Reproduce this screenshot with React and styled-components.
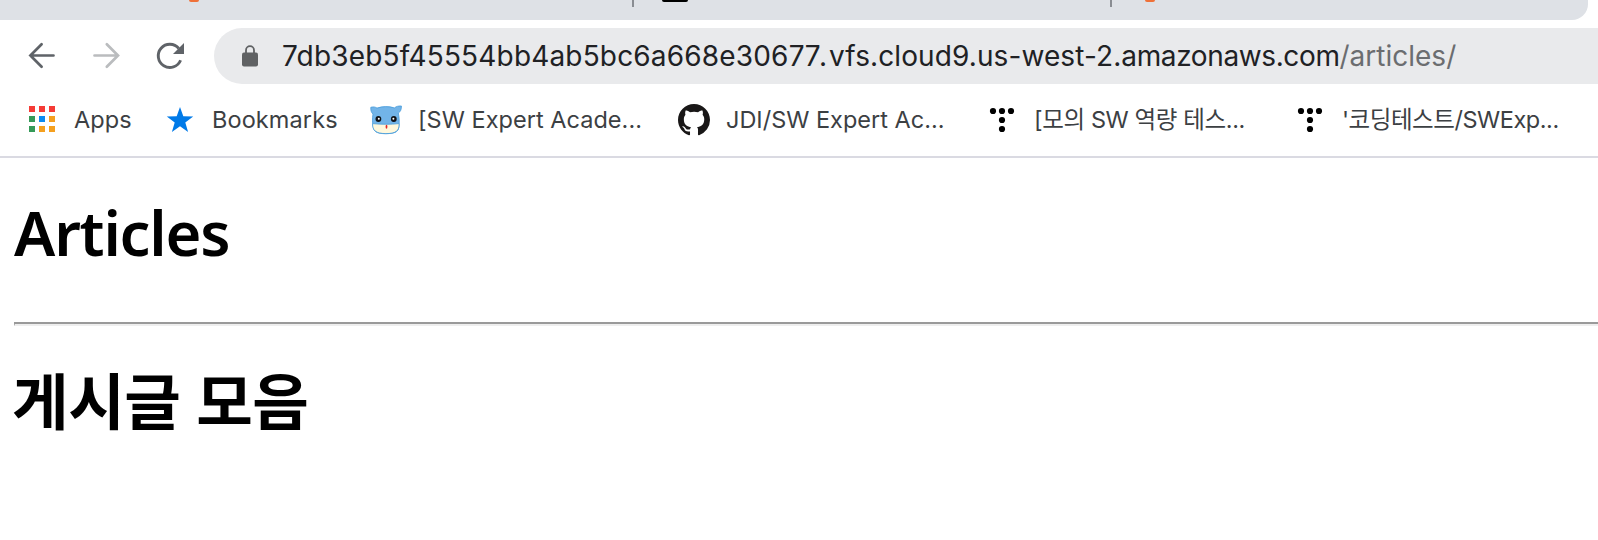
import React from "react";
import styled, { createGlobalStyle } from "styled-components";

const GlobalStyle = createGlobalStyle`
  * { box-sizing: border-box; }
  body { margin: 0; background: #fff; overflow: hidden; }
`;

const Window = styled.div`
  height: 540px;
  display: flex;
  flex-direction: column;
  overflow: hidden;
  background: #fff;
  font-family: Inter, "Noto Sans CJK KR", sans-serif;
`;

const TabStrip = styled.div`
  display: flex;
  align-items: flex-start;
  flex: none;
  width: 1588px;
  height: 20px;
  background: #dee1e6;
  border-bottom-right-radius: 16px;
`;

const Favicon = styled.span`
  flex: none;
  width: ${(p) => p.$width}px;
  height: 2px;
  margin-left: ${(p) => p.$offset}px;
  background: ${(p) => p.$color};
  border-radius: 0 0 5px 5px;
`;

const TabDivider = styled.span`
  flex: none;
  width: 2px;
  height: 7px;
  margin-left: ${(p) => p.$offset}px;
  background: #898c92;
`;

const Toolbar = styled.div`
  display: flex;
  align-items: center;
  flex: none;
  height: 72px;
  padding-left: 26px;
`;

const NavButton = styled.span`
  display: flex;
  flex: none;
  width: 32px;
  height: 32px;
  margin-right: 32px;
`;

const AddressBar = styled.div`
  display: flex;
  align-items: center;
  flex: 1;
  height: 56px;
  margin-left: -4px;
  padding-left: 28px;
  background: #e9eaec;
  border-radius: 28px 0 0 28px;
`;

const Url = styled.div`
  margin-left: 24px;
  font-size: 28px;
  line-height: 40px;
  white-space: nowrap;
  color: #202124;
`;

const Host = styled.span`
  letter-spacing: ${(p) => p.$spacing}px;
`;

const Path = styled.span`
  letter-spacing: ${(p) => p.$spacing}px;
  color: #6b6d70;
`;

const BookmarksBar = styled.nav`
  display: grid;
  grid-template-columns: 138px 206px 308px 308px 308px 304px;
  align-items: center;
  flex: none;
  height: 66px;
  padding: 0 0 8px 26px;
  border-bottom: 2px solid #dadae2;
`;

const Bookmark = styled.div`
  display: flex;
  align-items: center;
  gap: 16px;
  height: 40px;
`;

const BookmarkIcon = styled.span`
  display: flex;
  flex: none;
  width: 32px;
  height: 32px;
`;

const BookmarkLabel = styled.span`
  font-size: 23.5px;
  line-height: 40px;
  letter-spacing: ${(p) => p.$spacing}px;
  white-space: nowrap;
  color: #3c4043;
`;

const Page = styled.main`
  flex: 1;
  padding-left: 14px;
  font-family: "Noto Sans", "Noto Sans CJK KR", sans-serif;
  color: #000;
`;

const Heading = styled.h1`
  margin: ${(p) => p.$top}px 0 0 ${(p) => p.$left || 0}px;
  height: 90px;
  font-size: ${(p) => p.$size}px;
  line-height: 90px;
  font-weight: ${(p) => p.$weight};
  letter-spacing: ${(p) => p.$spacing}px;
  white-space: nowrap;
`;

const Rule = styled.hr`
  height: 4px;
  margin: 45px 0 0;
  border: solid;
  border-width: 2px 0 2px 1px;
  border-color: #9a9a9a #eee #eee #9a9a9a;
`;

const BackIcon = () => (
  <svg width="32" height="32" viewBox="0 0 32 32" fill="none" stroke="#5f6368" strokeWidth="2.7" strokeLinecap="round">
    <path d="M27.500 15.500H4.500M15.600 4.200L4.400 15.500l11.200 11.200" />
  </svg>
);

const ForwardIcon = () => (
  <svg width="32" height="32" viewBox="0 0 32 32" fill="none" stroke="#babcbe" strokeWidth="2.7" strokeLinecap="round">
    <path d="M4.500 15.500h23M16.800 4.200l11.200 11.300-11.200 11.200" />
  </svg>
);

const ReloadIcon = () => (
  <svg width="32" height="32" viewBox="0 0 32 32">
    <path d="M26.600 20.300A11.600 11.600 0 1 1 24.800 8.500" fill="none" stroke="#5f6368" strokeWidth="2.9" />
    <path d="M30 3v11H19z" fill="#5f6368" />
  </svg>
);

const LockIcon = () => (
  <svg width="16" height="22" viewBox="0 0 16 22">
    <path d="M4 9V5.200a4 4 0 0 1 8 0V9" fill="none" stroke="#5f6163" strokeWidth="1.8" />
    <rect x="0" y="7.600" width="16" height="14" rx="2" fill="#5f6163" />
  </svg>
);

const gridColors = ["#f53b35", "#f53b35", "#f53b35", "#359a58", "#0a8bf2", "#f5a01f", "#359a58", "#f5a01f", "#f5a01f"];

const AppsIcon = () => (
  <svg width="32" height="32" viewBox="0 0 32 32">
    {gridColors.map((color, i) => (
      <rect key={i} x={3 + (i % 3) * 10} y={2 + Math.floor(i / 3) * 10} width="6" height="6" fill={color} />
    ))}
  </svg>
);

const StarIcon = () => (
  <svg width="32" height="32" viewBox="0 0 32 32">
    <path d="M16 3l3.300 9.300 9.900.1-7.900 6.100 2.800 9.400L16 22.300l-8.100 5.600 2.800-9.400-7.900-6.100 9.900-.1z" fill="#007ae8" />
  </svg>
);

const HippoIcon = () => (
  <svg width="32" height="32" viewBox="0 0 32 32" stroke="#459bda" strokeWidth=".8">
    <path d="M.8 3.300c2.500-.7 4.500-.4 6.200.8 5.300-1.900 12.200-2 17.400-.2 2-1.600 4-2 7-1.900.1 3.200-.8 5.800-3.100 7 1 4 1.200 9.500.5 14.500-.8 5-5 6-13 6.200-7.500-.1-11.500-1.200-12.500-6.200-.9-4-1.100-9.500-.3-13.500C1.300 8.500.6 6.400.8 3.300z" fill="#72b4e8" />
    <path d="M2.600 19.600c8 .9 18.500.9 26.500 0 .2 7.600-3.400 9.900-13.200 10C6 29.500 2.300 26.600 2.600 19.600z" fill="#fff8dc" />
    <g stroke="none">
      <circle cx="8.400" cy="15" r="2.900" fill="#101318" />
      <circle cx="23.800" cy="15" r="2.900" fill="#101318" />
      <circle cx="8.800" cy="14.800" r="1" fill="#fff" />
      <circle cx="23.400" cy="14.800" r="1" fill="#fff" />
      <ellipse cx="16.500" cy="22.700" rx=".9" ry="2" fill="#e02828" />
    </g>
  </svg>
);

const GithubIcon = () => (
  <svg width="32" height="32" viewBox="0 0 16 16">
    <path
      fill="#191717"
      d="M8 0C3.580 0 0 3.580 0 8c0 3.540 2.290 6.530 5.470 7.590.4.070.55-.17.55-.38 0-.19-.01-.82-.01-1.490-2.010.37-2.530-.49-2.690-.94-.09-.23-.48-.94-.82-1.130-.28-.15-.68-.52-.01-.53.63-.01 1.080.58 1.230.82.72 1.210 1.870.87 2.330.66.07-.52.28-.87.51-1.070-1.780-.2-3.640-.89-3.640-3.950 0-.87.31-1.590.82-2.150-.08-.2-.36-1.020.08-2.120 0 0 .67-.21 2.200.82.64-.18 1.320-.27 2-.27s1.360.09 2 .27c1.530-1.040 2.200-.82 2.200-.82.44 1.100.16 1.920.08 2.120.51.56.82 1.270.82 2.150 0 3.070-1.870 3.750-3.650 3.950.29.25.54.73.54 1.480 0 1.070-.01 1.930-.01 2.200 0 .21.15.46.55.38A8.010 8.010 0 0 0 16 8c0-4.420-3.580-8-8-8z"
    />
  </svg>
);

const tistoryDots = [[7, 7], [16, 7], [25, 7], [16, 16], [16, 25]];

const TistoryIcon = () => (
  <svg width="32" height="32" viewBox="0 0 32 32">
    {tistoryDots.map(([x, y]) => (
      <circle key={`${x}-${y}`} cx={x} cy={y} r="3.1" fill="#000" />
    ))}
  </svg>
);

const hostParts = [
  { text: "7db3eb5f45554bb4ab5bc6a668e3067", spacing: 0.17 },
  { text: "7.", spacing: 2 },
  { text: "vfs.cloud9.us-west-2.", spacing: 0.1 },
  { text: "amazonaws.com", spacing: -0.38 },
];

const bookmarks = [
  { label: "Apps", icon: AppsIcon, spacing: 0.1 },
  { label: "Bookmarks", icon: StarIcon, spacing: 0.1 },
  { label: "[SW Expert Acade...", icon: HippoIcon, spacing: 0.03 },
  { label: "JDI/SW Expert Ac...", icon: GithubIcon, spacing: 0 },
  { label: "[모의 SW 역량 테스...", icon: TistoryIcon, spacing: -0.38 },
  { label: "'코딩테스트/SWExp...", icon: TistoryIcon, spacing: -0.45 },
];

export default function App() {
  return (
    <Window>
      <GlobalStyle />
      <TabStrip>
        <Favicon $width={10} $offset={189} $color="#ef7139" />
        <TabDivider $offset={433} />
        <Favicon $width={26} $offset={28} $color="#000" />
        <TabDivider $offset={422} />
        <Favicon $width={10} $offset={33} $color="#ef7139" />
      </TabStrip>
      <Toolbar>
        <NavButton><BackIcon /></NavButton>
        <NavButton><ForwardIcon /></NavButton>
        <NavButton><ReloadIcon /></NavButton>
        <AddressBar>
          <LockIcon />
          <Url>
            {hostParts.map(({ text, spacing }) => (
              <Host key={text} $spacing={spacing}>{text}</Host>
            ))}
            <Path $spacing={0}>/articles/</Path>
          </Url>
        </AddressBar>
      </Toolbar>
      <BookmarksBar>
        {bookmarks.map(({ label, icon: Icon, spacing }) => (
          <Bookmark key={label}>
            <BookmarkIcon><Icon /></BookmarkIcon>
            <BookmarkLabel $spacing={spacing}>{label}</BookmarkLabel>
          </Bookmark>
        ))}
      </BookmarksBar>
      <Page>
        <Heading $top={29} $size={61.5} $weight={600} $spacing={-1.2}>Articles</Heading>
        <Rule />
        <Heading $top={30} $left={-2} $size={61.5} $weight={700} $spacing={-0.4}>게시글 모음</Heading>
      </Page>
    </Window>
  );
}
